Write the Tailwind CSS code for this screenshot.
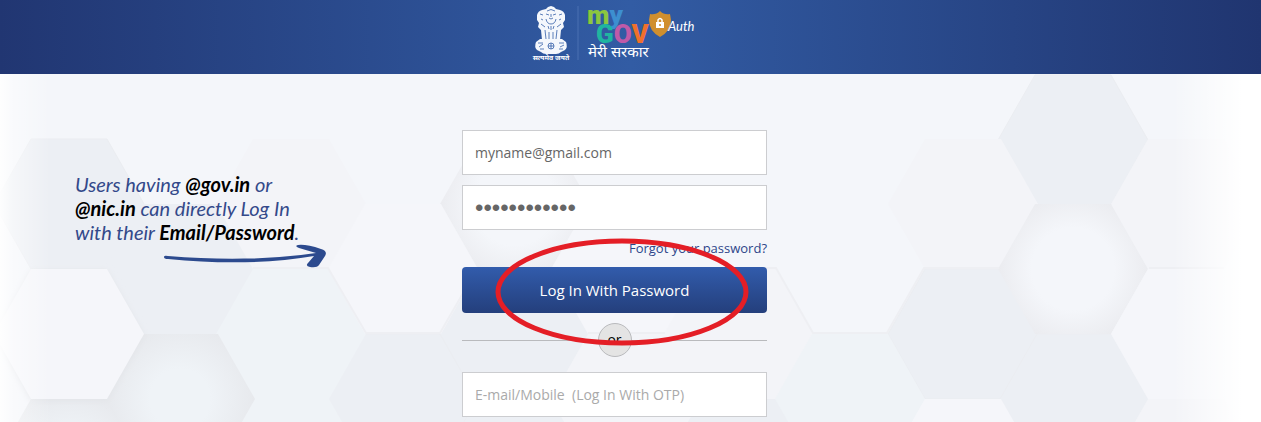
<!DOCTYPE html>
<html lang="en">
<head>
    <meta charset="UTF-8" />
    <meta name="viewport" content="width=device-width, initial-scale=1.0">
    <title>MyGov Auth - Log In</title>
    <script src="https://cdn.jsdelivr.net/npm/@tailwindcss/browser@4"></script>
</head>
<body class="min-h-screen flex flex-col bg-[#f4f6fa] font-['Open_Sans','Noto_Sans',sans-serif]">

    <header class="flex justify-center pt-1 pb-2 pr-8 bg-linear-to-r from-[#213672] via-[#325ca4] to-[#203570]">
        <svg class="w-[166px] h-[62px]" viewBox="532 4 166 62" role="img" aria-label="MyGov Auth">
            <!-- national emblem -->
            <g fill="#f4f7fc">
                <path d="M546 9l2-2 3-1 3 1 2 2 4 1q4 1 5 5v5l-2 3 1 4-3 3-1 10h-18l-1-10-3-3 1-4-2-3v-5q1-4 5-5z"/>
                <path d="M540 39h22l4 3q2 5-1 8l-4 2q-2 2-5 2h-10q-3 0-5-2l-4-2q-3-3-1-8z"/>
            </g>
            <g fill="none" stroke="#3560a8" stroke-width=".8">
                <path d="M547 11q4-3 8 0M546 14l3 1M553 15l3-1M549 18q2 2 4 0M551 14v3M540 14l3 1M559 15l3-1M541 19l2 1M559 20l2-1M546 19q1 5 5 5t5-5M541 24l4 3M561 24l-4 3M548 26l1 3M551 26v4M554 26l-1 3M545 30l1 9M549 32v7M553 32v7M557 30l-1 9"/>
                <path d="M538 43h5M559 43h5M539 47l4-3M560 47l4-2M540 49h4M559 49h4"/>
                <circle cx="551" cy="46" r="3"/>
                <path d="M551 43v6M548 46h6"/>
            </g>
            <text x="551" y="60" text-anchor="middle" font-size="7" font-weight="700" fill="#fff">सत्यमेव जयते</text>
            <path d="M578 6v54" stroke="#4a70b2"/>
            <!-- wordmark -->
            <g font-family="Roboto" font-weight="900" font-size="26">
                <text x="587" y="24"><tspan fill="#8cc63f">m</tspan><tspan fill="#3d8fd0">y</tspan></text>
                <text x="596" y="43"><tspan fill="#1fb5a0">G</tspan><tspan fill="#c05aa8">O</tspan><tspan fill="#f0702c">V</tspan></text>
            </g>
            <text x="588" y="57" font-size="15" fill="#fff">मेरी सरकार</text>
            <path d="M660 11q4 4 10 3l1 6q0 11-11 17-11-6-11-17l1-6q6 1 10-3z" fill="#d08f2e"/>
            <rect x="656" y="22" width="8" height="6" fill="#fff"/>
            <path d="M658 22v-2q2-3 4 0v2" fill="none" stroke="#fff" stroke-width="1.5"/>
            <path d="M660 24v2" stroke="#d08f2e" stroke-width="1.5"/>
            <text x="668" y="31" font-family="Lato" font-size="13" font-style="italic" fill="#fff">Auth</text>
        </svg>
    </header>

    <main class="relative isolate grow grid grid-cols-[1fr_305px_1fr] pt-14 pb-1 pr-8 overflow-hidden">

        <!-- honeycomb backdrop -->
        <svg class="absolute inset-0 -z-10 w-full h-full" viewBox="0 74 1261 348" preserveAspectRatio="xMidYMin slice" aria-hidden="true">
            <defs>
                <path id="hex" d="M-75 0L-38-65H38L75 0 38 65H-38z"/>
                <radialGradient id="dip" gradientUnits="userSpaceOnUse" cx="0" cy="0" r="75">
                    <stop offset=".55" stop-color="#f4f6fa"/>
                    <stop offset="1" stop-color="#ebecf0"/>
                </radialGradient>
                <radialGradient id="dipBlue" gradientUnits="userSpaceOnUse" cx="0" cy="0" r="75">
                    <stop offset=".4" stop-color="#eff3f7"/>
                    <stop offset="1" stop-color="#e7e9ed"/>
                </radialGradient>
                <linearGradient id="edges">
                    <stop offset="0" stop-color="#fff" stop-opacity=".9"/>
                    <stop offset=".01" stop-color="#fff" stop-opacity=".5"/>
                    <stop offset=".04" stop-color="#fff" stop-opacity="0"/>
                    <stop offset=".93" stop-color="#fff" stop-opacity="0"/>
                    <stop offset=".985" stop-color="#fff"/>
                </linearGradient>
                <filter id="soft" x="-20%" y="-20%" width="140%" height="140%"><feGaussianBlur stdDeviation="3"/></filter>
            </defs>
            <g fill="#eceff4" stroke="#ebedf1">
                <use href="#hex" x="69" y="204"/>
                <use href="#hex" x="403" y="399"/>
                <use href="#hex" x="515" y="334"/>
                <use href="#hex" x="515" y="464"/>
                <use href="#hex" x="738" y="464"/>
                <use href="#hex" x="963" y="334"/>
                <use href="#hex" x="1073" y="140"/>
                <use href="#hex" x="1075" y="399"/>
            </g>
            <use href="#hex" x="180" y="269" fill="#eceff4"/>
            <g fill="#f3f4f8">
                <use href="#hex" x="291" y="204"/>
                <use href="#hex" x="963" y="204"/>
                <use href="#hex" x="1186" y="204"/>
                <use href="#hex" x="1186" y="464"/>
                <use href="#hex" x="738" y="334"/>
                <use href="#hex" x="626" y="399"/>
            </g>
            <g fill="#eff3f7">
                <use href="#hex" x="291" y="334"/>
                <use href="#hex" x="850" y="399"/>
                <use href="#hex" x="291" y="464"/>
            </g>
            <use href="#hex" transform="translate(515 204)" fill="url(#dip)"/>
            <use href="#hex" transform="translate(1073 269)" fill="url(#dip)"/>
            <use href="#hex" transform="translate(180 399)" fill="url(#dipBlue)"/>
            <use href="#hex" transform="translate(69 464)" fill="url(#dipBlue)"/>
            <use href="#hex" x="69" y="336" fill="#e3e5e9" filter="url(#soft)"/>
            <g fill="#f5f6fa">
                <use href="#hex" x="69" y="334"/>
                <use href="#hex" x="403" y="269"/>
                <use href="#hex" x="626" y="269"/>
                <use href="#hex" x="1186" y="334"/>
                <use href="#hex" x="963" y="464"/>
            </g>
            <path d="M253 268h75l38 65h74l37-64M700 268h76l37 65h74l37-65h75M588 333h77M1149 268h75" fill="none" stroke="#eeeff3" stroke-width="2"/>
            <rect y="74" width="1261" height="1000" fill="url(#edges)"/>
        </svg>

        <section class="pl-[75px] pt-[42px]">
            <p class="font-[Lato] italic text-[20px] leading-6 text-[#33498a] whitespace-nowrap">
                Users having <strong class="text-black">@gov.in</strong> or<br>
                <strong class="text-black">@nic.in</strong> can directly Log In<br>
                with their <strong class="text-black">Email/Password</strong>.
            </p>
            <svg class="ml-[88px] w-[164px] h-6" viewBox="163 244 164 24" fill="#2c4a8e" aria-hidden="true">
                <path d="M164 257q0-2 4-1 72 6 133-1l15-2-17-5q-5-2-1-3 8-1 23 4 7 2 4 7l-6 9q-2 3-9 2-5-1-2-4l6-7q-65 11-146 3-4 0-4-2z"/>
            </svg>
        </section>

        <form class="relative flex flex-col">
            <input type="email" aria-label="E-mail" value="myname@gmail.com" class="h-[45px] px-3 mb-[10px] bg-white border border-[#cccdd0] text-sm text-[#666]">
            <input type="password" aria-label="Password" value="mypassword12" class="h-[45px] px-3 bg-white border border-[#cccdd0] font-['Liberation_Sans'] text-2xl text-[#666]">
            <a href="#" class="self-end leading-[37px] text-[13px] text-[#2d4589]">Forgot your password?</a>
            <button type="submit" class="h-[46px] rounded bg-linear-to-b from-[#325cac] to-[#243f7c] text-white text-[15px]">Log In With Password</button>
            <div class="flex items-center mt-[10px] mb-[15px]">
                <span class="grow h-px bg-[#b9babd]"></span>
                <span class="size-[34px] rounded-full border border-[#b9babd] bg-[#e4e4e4] text-center text-sm leading-8 text-black">or</span>
                <span class="grow h-px bg-[#b9babd]"></span>
            </div>
            <input type="text" aria-label="E-mail or mobile" placeholder="E-mail/Mobile  (Log In With OTP)" class="h-[45px] px-3 bg-white border border-[#cccdd0] text-sm placeholder:text-[#aaa]">

            <!-- highlight around the login button -->
            <svg class="absolute left-[33px] top-[107px] w-[254px] h-[110px] pointer-events-none" viewBox="0 0 254 110" fill="none" aria-hidden="true">
                <ellipse cx="127" cy="55" rx="124" ry="51" stroke="#e41e26" stroke-width="5"/>
            </svg>
        </form>
    </main>
</body>
</html>
